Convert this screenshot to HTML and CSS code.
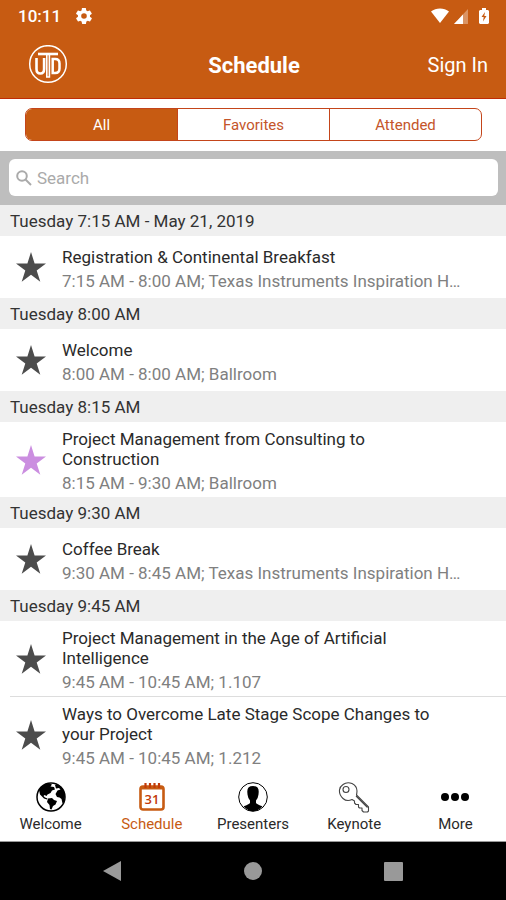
FILE: index.html
```html
<!DOCTYPE html>
<html lang="en">
<head>
    <meta charset="UTF-8">
    <meta name="viewport" content="width=device-width, initial-scale=1.0">
    <title>Schedule</title>
    <link rel="stylesheet" href="styles.css">
</head>
<body>
    <svg class="sprite" aria-hidden="true">
        <symbol id="star" viewBox="0 0 30 30">
            <path d="M15 0l3.600 11.400H30l-9.300 7 3.600 11.400-9.300-7-9.300 7 3.600-11.400-9.300-7h11.400z"/>
        </symbol>
    </svg>
    <header class="app-header">
        <div class="status-bar">
            <span class="clock">10:11</span>
            <svg class="gear" width="16" height="16" viewBox="2 2 20 20" fill="#fff">
                <path d="M19.400 13c0-.3.1-.6.1-1s0-.7-.1-1l2.100-1.600c.2-.2.3-.4.1-.7l-2-3.400c-.1-.2-.4-.3-.6-.2l-2.500 1c-.5-.4-1.100-.7-1.700-1l-.4-2.600c0-.3-.2-.5-.5-.5h-4c-.2 0-.4.2-.5.4l-.4 2.700c-.6.2-1.100.6-1.700 1l-2.500-1c-.2-.1-.5 0-.6.2l-2 3.400c-.1.2-.1.5.1.7l2.200 1.600c0 .3-.1.6-.1 1s0 .7.1 1l-2.100 1.600c-.2.2-.3.4-.1.7l2 3.400c.1.2.4.3.6.2l2.500-1c.5.4 1.100.7 1.700 1l.4 2.600c0 .3.2.5.5.5h4c.2 0 .5-.2.5-.4l.4-2.700c.6-.2 1.200-.6 1.700-1l2.500 1c.2.1.5 0 .6-.2l2-3.400c.1-.2.1-.5-.1-.7zM12 15.500a3.500 3.500 0 1 1 0-7 3.500 3.500 0 0 1 0 7z"/>
            </svg>
            <div class="status-icons">
                <svg width="20" height="16" viewBox="0 0 20 16" fill="#fff">
                    <path d="M10 15L1 3.500C6-.5 14-.5 19 3.500z"/>
                </svg>
                <svg class="signal" width="16" height="16" viewBox="0 0 16 16" fill="#fff">
                    <path d="M1 16L15 1v15z" opacity=".35"/>
                    <path d="M1 16L10 6.500v9.500z"/>
                </svg>
                <svg width="12" height="18" viewBox="0 0 12 18">
                    <path d="M2 3h2V1h4v2h2l1 1v12l-1 1H2l-1-1V4z" fill="#fff"/>
                    <path d="M7 5L3.500 10h2.200L5 14.500 8.500 9H6.300z" fill="#c75b12"/>
                </svg>
            </div>
        </div>
        <div class="title-bar">
            <a href="#home" class="logo" aria-label="UTD home">
                <svg width="40" height="40" viewBox="0 0 40 40" fill="none" stroke="#fff">
                    <circle cx="20" cy="19" r="18.300" stroke-width="1.500"/>
                    <path d="M8.500 13V24q0 4.500 3.800 4.500t3.800-4.500V13" stroke-width="2.600"/>
                    <path d="M10 9h20" stroke-width="2.600"/>
                    <path d="M18.800 10v22h2.600V10" stroke-width="1.600"/>
                    <path d="M24.700 14v14h2.500q4.300 0 4.300-4.500V18.500q0-4.500-4.300-4.500z" stroke-width="2.500"/>
                </svg>
            </a>
            <h1>Schedule</h1>
            <a href="#sign-in" class="sign-in">Sign In</a>
        </div>
    </header>

    <main>
        <div class="filters">
            <div class="segmented">
                <button type="button" class="active" aria-pressed="true">All</button>
                <button type="button" aria-pressed="false">Favorites</button>
                <button type="button" aria-pressed="false">Attended</button>
            </div>
        </div>
        <form class="search">
            <label class="search-box">
                <svg width="16" height="16" viewBox="0 0 16 16" fill="none" stroke="#aaa" stroke-width="2">
                    <circle cx="6" cy="6" r="4.800"/>
                    <path d="M9.500 9.500L15 15"/>
                </svg>
                <input type="search" placeholder="Search" aria-label="Search">
            </label>
        </form>

        <h2>Tuesday 7:15 AM - May 21, 2019</h2>
        <ul>
            <li class="session">
                <button type="button" class="star" aria-label="Favorite"><svg><use href="#star"/></svg></button>
                <div class="session-text">
                    <h3>Registration &amp; Continental Breakfast</h3>
                    <p>7:15 AM - 8:00 AM; Texas Instruments Inspiration Hall</p>
                </div>
            </li>
        </ul>
        <h2>Tuesday 8:00 AM</h2>
        <ul>
            <li class="session">
                <button type="button" class="star" aria-label="Favorite"><svg><use href="#star"/></svg></button>
                <div class="session-text">
                    <h3>Welcome</h3>
                    <p>8:00 AM - 8:00 AM; Ballroom</p>
                </div>
            </li>
        </ul>
        <h2>Tuesday 8:15 AM</h2>
        <ul>
            <li class="session">
                <button type="button" class="star starred" aria-label="Remove favorite"><svg><use href="#star"/></svg></button>
                <div class="session-text">
                    <h3>Project Management from Consulting to Construction</h3>
                    <p>8:15 AM - 9:30 AM; Ballroom</p>
                </div>
            </li>
        </ul>
        <h2>Tuesday 9:30 AM</h2>
        <ul>
            <li class="session">
                <button type="button" class="star" aria-label="Favorite"><svg><use href="#star"/></svg></button>
                <div class="session-text">
                    <h3>Coffee Break</h3>
                    <p>9:30 AM - 8:45 AM; Texas Instruments Inspiration Hall</p>
                </div>
            </li>
        </ul>
        <h2>Tuesday 9:45 AM</h2>
        <ul>
            <li class="session">
                <button type="button" class="star" aria-label="Favorite"><svg><use href="#star"/></svg></button>
                <div class="session-text">
                    <h3>Project Management in the Age of Artificial Intelligence</h3>
                    <p>9:45 AM - 10:45 AM; 1.107</p>
                </div>
            </li>
            <li class="session">
                <button type="button" class="star" aria-label="Favorite"><svg><use href="#star"/></svg></button>
                <div class="session-text">
                    <h3>Ways to Overcome Late Stage Scope Changes to your Project</h3>
                    <p>9:45 AM - 10:45 AM; 1.212</p>
                </div>
            </li>
        </ul>
    </main>

    <nav class="tab-bar">
        <a href="#welcome">
            <svg width="32" height="32" viewBox="0 0 32 32">
                <circle cx="16" cy="16" r="14" fill="#fff" stroke="#000" stroke-width="1.500"/>
                <path d="M4 9C6 5 10 2.500 14 2.300l3 1.200-1.500 2 3.500.5 1 2.500-3 1-1.500 2.500-3 1.500-1 1.500-2-1-1 1 1.500 1.500 2.500 1-.5 1-3-1-4-4z"/>
                <path d="M13 17.500l4-.5 2 2 3 1-1.500 3.500-2.500 1.500-1.500 3.500-1.500-.5-.5-4-2.500-3z"/>
                <path d="M20 4l2.500-1q4.500 2.500 6.500 7l1 5-1 6-1.500 1.500-1-4.500-2-1.500-2.500-.5-1.500-3 2-3.500 3-1-1.500-1.500-3 .5z"/>
            </svg>
            <span>Welcome</span>
        </a>
        <a href="#schedule" class="current" aria-current="page">
            <svg width="32" height="32" viewBox="0 0 32 32">
                <rect x="4.500" y="5.500" width="23" height="23" rx="2.500" fill="#fff" stroke="#c75b12" stroke-width="2.600"/>
                <path d="M5 5h22v3.500H5z" fill="#c75b12"/>
                <path d="M9.500 2v5M14 2v5M18.500 2v5M23 2v5" stroke="#c23a08" stroke-width="2.200"/>
                <text x="16" y="23" class="calendar-day">31</text>
            </svg>
            <span>Schedule</span>
        </a>
        <a href="#presenters">
            <svg width="32" height="32" viewBox="0 0 32 32">
                <circle cx="16" cy="16" r="14.300" fill="#fff" stroke="#000"/>
                <path d="M16 5q6 0 5.700 6l-.2 2.500q-.5 4-2.500 6v2.500q1 1.500 6.500 3.300Q21 30.300 16 30.300T6.500 25.300Q12 23.500 13 22v-2.500q-2-2-2.500-6L10.300 11Q10 5 16 5z"/>
            </svg>
            <span>Presenters</span>
        </a>
        <a href="#keynote">
            <svg width="32" height="32" viewBox="0 0 32 32" fill="none" stroke="#444" stroke-width="1.100" stroke-linejoin="round">
                <path d="M5 3.500Q9 .5 14 2.500q5 2.500 5 7.500-.2 3-.5 4L30.500 26v4l-1 1h-4l-1.500-1.500V27h-2.500l-1-1v-2.500H18L16.500 22v-2L14 18.500q-5 2.500-9-1Q1 14 1.500 9 2 5.500 5 3.500z"/>
                <circle cx="8" cy="8.500" r="3"/>
                <path d="M18 15l11.500 11.500"/>
            </svg>
            <span>Keynote</span>
        </a>
        <a href="#more">
            <svg width="32" height="32" viewBox="0 0 32 32">
                <circle cx="6" cy="16" r="4"/>
                <circle cx="16" cy="16" r="4"/>
                <circle cx="26" cy="16" r="4"/>
            </svg>
            <span>More</span>
        </a>
    </nav>

    <div class="system-bar">
        <button type="button" aria-label="Back">
            <svg width="20" height="22" viewBox="0 0 20 22"><path d="M0 11L18 1v20z"/></svg>
        </button>
        <button type="button" aria-label="Home">
            <svg width="20" height="22" viewBox="0 0 20 22"><circle cx="10" cy="11" r="9"/></svg>
        </button>
        <button type="button" aria-label="Recent apps">
            <svg width="20" height="22" viewBox="0 0 20 22"><rect x="1" y="2" width="19" height="19" rx="1"/></svg>
        </button>
    </div>
</body>
</html>
```
FILE: styles.css
```css
* {
    box-sizing: border-box;
}
body {
    margin: 0;
    min-height: 100vh;
    display: flex;
    flex-direction: column;
    font-family: Roboto, sans-serif;
    background-color: #fff;
    color: #2a2a2a;
}
button {
    font-family: inherit;
    border: none;
    background: none;
    padding: 0;
}
a {
    color: inherit;
    text-decoration: none;
}
.sprite {
    display: none;
}

/* Header */
.app-header {
    background-color: #c75b12;
    border-bottom: 1px solid #c02c06;
    color: #fff;
}
.status-bar {
    display: flex;
    align-items: center;
    height: 32px;
    padding: 0 16px 0 18px;
}
.clock {
    font-size: 17px;
    font-weight: 500;
}
.gear {
    margin-left: 15px;
}
.status-icons {
    display: flex;
    align-items: center;
    gap: 3px;
    margin-left: auto;
}
.signal {
    margin-right: 6px;
}
.title-bar {
    display: grid;
    grid-template-columns: 1fr auto 1fr;
    align-items: center;
    height: 66px;
    padding: 0 18px 0 28px;
}
.logo svg {
    display: block;
}
.title-bar h1 {
    margin: 0 8px 0 0;
    font-size: 22px;
    font-weight: 700;
}
.sign-in {
    justify-self: end;
    font-size: 20px;
}

/* Filters and search */
.filters {
    padding: 9px 24px 10px 25px;
}
.segmented {
    display: flex;
    height: 33px;
    border: 1px solid #c4451a;
    border-radius: 7px;
    overflow: hidden;
}
.segmented button {
    flex: 1;
    font-size: 15px;
    color: #c4552a;
}
.segmented button + button {
    border-left: 1px solid #c4451a;
}
.segmented .active {
    background-color: #c75b12;
    color: #fff;
}
.search {
    padding: 8px 8px 9px 9px;
    background-color: #bebebe;
}
.search-box {
    display: flex;
    align-items: center;
    gap: 5px;
    height: 37px;
    padding: 0 7px;
    border-radius: 6px;
    background-color: #fff;
}
.search-box input {
    flex: 1;
    min-width: 0;
    border: none;
    outline: none;
    padding: 0;
    background: none;
    font-family: inherit;
    font-size: 17px;
}
.search-box input::placeholder {
    color: #aaa;
}

/* Sessions */
main {
    flex: 1;
}
main h2 {
    margin: 0;
    padding: 1px 10px 0;
    font-size: 17px;
    font-weight: 400;
    line-height: 30px;
    background-color: #efefef;
    color: #333;
}
main ul {
    list-style: none;
    margin: 0;
    padding: 0 0 0 10px;
}
.session {
    display: flex;
    align-items: center;
    min-height: 62px;
    padding-right: 42px;
}
.session + .session {
    border-top: 1px solid #ddd;
}
.star {
    width: 42px;
    height: 30px;
    margin-right: 10px;
}
.star svg {
    display: block;
    width: 30px;
    height: 30px;
    margin-left: 6px;
    fill: #4c4c4c;
}
.starred svg {
    fill: #cb8ee0;
}
.session-text {
    flex: 1;
    min-width: 0;
    padding-top: 7px;
}
.session-text h3 {
    margin: 0;
    padding-right: 16px;
    font-size: 17px;
    font-weight: 400;
    line-height: 20px;
}
.session-text p {
    margin: 0;
    font-size: 17px;
    line-height: 28px;
    color: #808080;
    white-space: nowrap;
    overflow: hidden;
    text-overflow: ellipsis;
}

/* Bottom bars */
.tab-bar {
    display: flex;
    height: 68px;
    padding-top: 7px;
    border-bottom: 1px solid #999;
}
.tab-bar a {
    flex: 1;
    display: flex;
    flex-direction: column;
    align-items: center;
    gap: 2px;
    font-size: 15px;
    line-height: 18px;
}
.tab-bar .current {
    color: #c75b12;
}
.calendar-day {
    font-family: "Open Sans", sans-serif;
    font-size: 13px;
    font-weight: 600;
    text-anchor: middle;
    fill: #c23a08;
}
.system-bar {
    display: flex;
    justify-content: center;
    gap: 120px;
    height: 58px;
    background-color: #000;
}
.system-bar svg {
    display: block;
    fill: #999;
}
```
